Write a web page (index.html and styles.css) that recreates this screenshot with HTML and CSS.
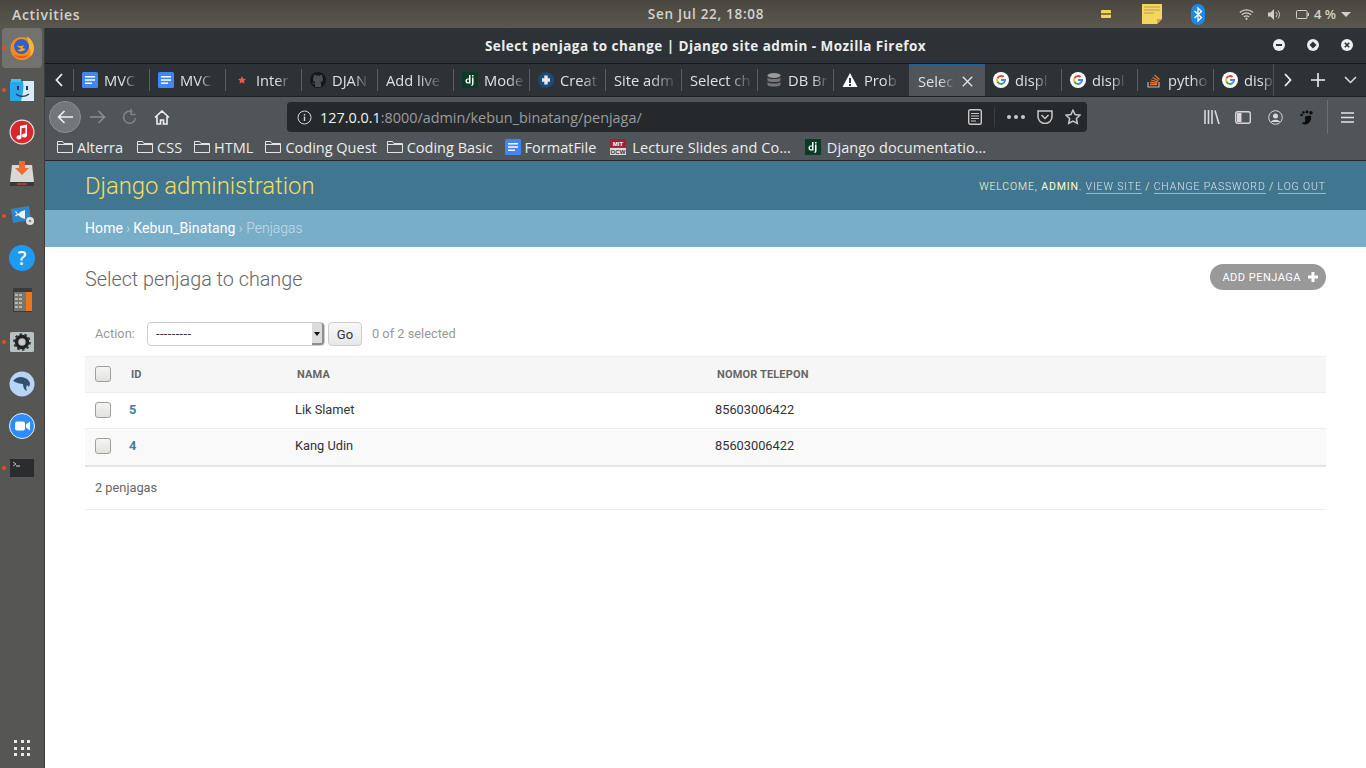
FILE: index.html
```html
<!DOCTYPE html>
<html lang="en">
<head>
    <meta charset="UTF-8">
    <title>Select penjaga to change | Django site admin</title>
    <link rel="stylesheet" href="styles.css">
</head>
<body>
    <svg class="sprites" width="0" height="0">
        <symbol id="i-doc" viewBox="0 0 16 16"><rect width="16" height="16" rx="1.5" fill="#4285f4"/><path d="M3 4h10v1.6H3zM3 7.2h10v1.6H3zM3 10.4h7V12H3z" fill="#fff"/></symbol>
        <symbol id="i-google" viewBox="0 0 16 16"><circle cx="8" cy="8" r="8" fill="#fff"/><path d="M8 3a5 5 0 0 1 3.3 1.2L10 5.6A3 3 0 0 0 5.2 7L3.6 5.7A5 5 0 0 1 8 3z" fill="#ea4335"/><path d="M3.6 5.7 5.2 7a3 3 0 0 0 0 2L3.6 10.3a5 5 0 0 1 0-4.6z" fill="#fbbc05"/><path d="M5.2 9A3 3 0 0 0 10 10.3l1.5 1.2A5 5 0 0 1 3.6 10.3z" fill="#34a853"/><path d="M13 7H8v2h2.8a2.5 2.5 0 0 1-.8 1.3l1.5 1.2A5 5 0 0 0 13 7z" fill="#4285f4"/></symbol>
        <symbol id="i-dj" viewBox="0 0 16 16"><rect width="16" height="16" fill="#0c3c26"/><path d="M7 3h1.500v8.500H5.800C4.200 11.500 3.500 10.600 3.500 9s.8-2.600 2.300-2.600H7zM7 7.600h-.9c-.7 0-1.100.5-1.100 1.400s.4 1.300 1.100 1.300H7zM10 3h1.500v1.400H10zM10 5.400h1.500v6.200c0 1.500-.6 2.200-2 2.400l-.3-1.100c.6-.2.800-.5.800-1.300z" fill="#fff"/></symbol>
        <symbol id="i-folder" viewBox="0 0 16 14"><path d="M.5 12.500v-11h5l1.500 2h8.500v9z" fill="none" stroke="#e4e4e2"/><path d="M.5 4.500h15" stroke="#e4e4e2"/></symbol>
    </svg>

    <div class="topbar">
        <span class="activities">Activities</span>
        <span class="clock">Sen Jul 22, 18:08</span>
        <div class="tray">
            <svg class="tray-note" width="10" height="8" viewBox="0 0 10 8"><rect width="10" height="8" rx="1" fill="#f3d65c"/><rect y="3" width="10" height="2" fill="#8a7a35"/></svg>
            <svg class="tray-sticky" width="20" height="20" viewBox="0 0 20 20"><path d="M0 0h20v15l-5 5H0z" fill="#f2d660"/><path d="M2 3h16M2 6h16M2 9h10" stroke="#b7a04a"/><path d="M15 20l5-5h-5z" fill="#c6a93f"/></svg>
            <svg class="tray-bt" width="14" height="21" viewBox="0 0 14 21"><rect width="14" height="21" rx="7" fill="#1e88e5"/><path d="M3.500 7l7 6.500-3.500 3.500V4l3.500 3.500-7 6.500" fill="none" stroke="#fff" stroke-width="1.300"/></svg>
            <svg class="tray-wifi" width="15" height="11" viewBox="0 0 15 11"><g fill="none" stroke="#cfcfcb" stroke-width="1.200"><path d="M.8 3.500a10 10 0 0 1 13.400 0"/><path d="M2.800 5.700a7 7 0 0 1 9.400 0"/><path d="M4.900 7.900a4 4 0 0 1 5.200 0"/></g><circle cx="7.500" cy="9.800" r="1.100" fill="#cfcfcb"/></svg>
            <svg class="tray-vol" width="13" height="11" viewBox="0 0 13 11"><path d="M0 3.500h2.500L6 0v11L2.500 7.500H0z" fill="#cfcfcb"/><path d="M8 3a3.500 3.500 0 0 1 0 5M10 1.500a6 6 0 0 1 0 8" fill="none" stroke="#cfcfcb"/></svg>
            <svg class="tray-batt" width="13" height="9" viewBox="0 0 13 9"><rect x=".5" y=".5" width="10.500" height="8" rx="1" fill="none" stroke="#cfcfcb"/><rect x="11.500" y="3" width="1.500" height="3" fill="#cfcfcb"/></svg>
            <span class="tray-pct">4 %</span>
            <span class="tray-caret"></span>
        </div>
    </div>

    <div class="desktop">
        <aside class="dock">
            <div class="dock-item is-active"><i class="run-dot"></i>
                <svg width="24" height="24" viewBox="0 0 24 24"><circle cx="12" cy="12.500" r="11.500" fill="#f68a1f"/><path d="M17 0c4 3 7 7 7 12a12 12 0 0 1-4 9c1.500-4 .5-8-2-11 .5-4-.5-7-1-10z" fill="#fcb336"/><circle cx="11.500" cy="10.500" r="7.500" fill="#2f62c8"/><path d="M7 9.500c2 1 5 .5 7-.5l-1.500 3 3 1c-2 3-6 3-8.500 1 2 0 3.500-.5 4-2-2 0-3.500-1-4-2.500z" fill="#f9a12c"/><path d="M4 19c4 4 11 4 15 0-4 1.500-9 1.500-15 0z" fill="#e8551f"/></svg>
            </div>
            <div class="dock-item"><i class="run-dot"></i>
                <svg width="24" height="22" viewBox="0 0 24 22"><rect y="2" width="24" height="20" rx="1" fill="#2aa7e8"/><path d="M13 2h11v20H11c2-6 3-13 2-20z" fill="#d7ecf8"/><path d="M1 0h10v3H1z" fill="#41c1f0"/><path d="M6 15c4 3 9 3 13 0" fill="none" stroke="#173b66" stroke-width="1.300"/><rect x="7" y="7" width="2" height="4" fill="#173b66"/><rect x="16" y="7" width="2" height="4" fill="#173b66"/></svg>
            </div>
            <div class="dock-item">
                <svg width="26" height="26" viewBox="0 0 26 26"><circle cx="13" cy="13" r="12.500" fill="#e8e8e8"/><circle cx="13" cy="13" r="11.300" fill="#d6282e"/><path d="M11 7l7-1.500v11a2.500 2 0 1 1-1.600-1.900V8.500l-3.900.8v9.200a2.500 2 0 1 1-1.500-1.900z" fill="#fff"/></svg>
            </div>
            <div class="dock-item">
                <svg width="24" height="26" viewBox="0 0 24 26"><path d="M2 4h20l2 17v4H0v-4z" fill="#d8d8d6"/><rect y="21" width="24" height="4" fill="#3a3a3a"/><rect x="7" y="22.500" width="10" height="1" fill="#e2562a"/><path d="M9 0h6v7h4l-7 7-7-7h4z" fill="#ef6a34"/></svg>
            </div>
            <div class="dock-item"><i class="run-dot"></i>
                <svg width="24" height="20" viewBox="0 0 24 20"><path d="M1 3l18-3 2 14-18 3z" fill="#2f86c9"/><path d="M8 8l3-2.500 4-1.500v9l-4-1.500-3-2.500-2 1.500-1-.8 2-2-2-2 1-.8z" fill="#e9f4fb"/><circle cx="20" cy="15" r="4" fill="#e2e2e2"/><circle cx="20" cy="15" r="1.300" fill="#8a8a8a"/></svg>
            </div>
            <div class="dock-item">
                <svg width="26" height="26" viewBox="0 0 26 26"><circle cx="13" cy="13" r="13" fill="#1e9bf0"/><text class="help-mark" x="13" y="19.500" text-anchor="middle">?</text></svg>
            </div>
            <div class="dock-item">
                <svg width="19" height="24" viewBox="0 0 19 24"><rect width="19" height="24" rx="1" fill="#3a3a3a"/><rect x="1" y="4" width="12" height="19" fill="#77776f"/><rect x="13" y="4" width="6" height="19" fill="#e8771f"/><g fill="#b5b5ad"><rect x="2" y="6" width="3" height="2"/><rect x="6" y="6" width="3" height="2"/><rect x="2" y="10" width="3" height="2"/><rect x="6" y="10" width="3" height="2"/><rect x="2" y="14" width="3" height="2"/><rect x="6" y="14" width="3" height="2"/><rect x="2" y="18" width="3" height="2"/><rect x="6" y="18" width="3" height="2"/></g></svg>
            </div>
            <div class="dock-item"><i class="run-dot"></i>
                <svg width="24" height="20" viewBox="0 0 24 20"><rect width="24" height="20" rx="1.500" fill="#b7c1c1"/><circle cx="12" cy="10" r="5.500" fill="none" stroke="#222" stroke-width="3.500"/><circle cx="12" cy="10" r="8" fill="none" stroke="#222" stroke-width="1.500" stroke-dasharray="2.500 2.500"/><circle cx="12" cy="10" r="2.500" fill="#ccc"/></svg>
            </div>
            <div class="dock-item">
                <svg width="26" height="26" viewBox="0 0 26 26"><circle cx="13" cy="13" r="12.500" fill="#b9d4f6"/><path d="M4 10c3-4 8-5 12-3 3 1 5 4 5 6l-1 3-2-2c-1 2-1 4 0 6-3-1-4-4-4-7-3 0-6-1-10-3z" fill="#33506e"/></svg>
            </div>
            <div class="dock-item">
                <svg width="26" height="26" viewBox="0 0 26 26"><circle cx="13" cy="13" r="12.500" fill="#2d8cff" stroke="#e8eef8"/><rect x="6" y="8.500" width="10" height="9" rx="2" fill="#fff"/><path d="M17 11.500l4-3v9l-4-3z" fill="#fff"/></svg>
            </div>
            <div class="dock-item"><i class="run-dot"></i>
                <svg width="24" height="18" viewBox="0 0 24 18"><rect width="24" height="18" fill="#2b2c2e"/><path d="M3 3l3 2-3 2" fill="none" stroke="#ddd" stroke-width=".8"/><path d="M6 7h4" stroke="#ddd"/></svg>
            </div>
            <div class="dock-grid">
                <i></i><i></i><i></i><i></i><i></i><i></i><i></i><i></i><i></i>
            </div>
        </aside>

        <div class="window">
            <div class="titlebar">
                <span class="title-text">Select penjaga to change | Django site admin - Mozilla Firefox</span>
                <div class="win-btns">
                    <svg width="12" height="12" viewBox="0 0 12 12"><circle cx="6" cy="6" r="6" fill="#eee"/><rect x="3" y="5" width="6" height="2" fill="#2d3236"/></svg>
                    <svg width="12" height="12" viewBox="0 0 12 12"><circle cx="6" cy="6" r="6" fill="#eee"/><path d="M6 2.500L9.500 6 6 9.500 2.500 6z" fill="#2d3236"/></svg>
                    <svg width="12" height="12" viewBox="0 0 12 12"><circle cx="6" cy="6" r="6" fill="#eee"/><path d="M3.800 3.800l4.400 4.400M8.200 3.800L3.800 8.200" stroke="#2d3236" stroke-width="1.600"/></svg>
                </div>
            </div>

            <div class="tabbar">
                <button class="tab-arrow"><svg width="8" height="14" viewBox="0 0 8 14"><path d="M7 1L1.500 7 7 13" fill="none" stroke="#eee" stroke-width="1.800"/></svg></button>
                <div class="tabs">
                    <div class="tab"><svg class="fav" width="16" height="16"><use href="#i-doc"/></svg><span class="tab-label">MVC</span></div>
                    <div class="tab"><svg class="fav" width="16" height="16"><use href="#i-doc"/></svg><span class="tab-label">MVC</span></div>
                    <div class="tab"><svg class="fav" width="16" height="16" viewBox="0 0 16 16"><path d="M8 4l1.200 2.700 2.800.3-2.100 1.900.6 2.900L8 10.300l-2.500 1.500.6-2.900L4 7l2.800-.3z" fill="#ee5a3a"/></svg><span class="tab-label">Inter</span></div>
                    <div class="tab"><svg class="fav" width="16" height="16" viewBox="0 0 16 16"><circle cx="8" cy="8" r="8" fill="#15171a"/><path d="M5 15v-3c-2 .4-2.600-.8-3-1.600 1 .2 1.500 1 2.900 1 .1-.6.300-1 .6-1.300C3.500 9.800 3 8.500 3 7c0-1 .3-1.700.8-2.300-.1-.6-.1-1.300.2-1.900 1 0 1.700.5 2.200.9a7 7 0 0 1 3.600 0c.5-.4 1.200-.9 2.200-.9.300.6.300 1.300.2 1.900.5.600.8 1.300.8 2.300 0 1.500-.5 2.800-2.500 3.100.4.400.5.900.5 1.500V15z" fill="#4a4f54"/></svg><span class="tab-label">DJAN</span></div>
                    <div class="tab"><span class="tab-label">Add live</span></div>
                    <div class="tab"><svg class="fav" width="16" height="16"><use href="#i-dj"/></svg><span class="tab-label">Mode</span></div>
                    <div class="tab"><svg class="fav" width="16" height="16" viewBox="0 0 16 16"><circle cx="8" cy="8" r="8" fill="#1c4a7a"/><path d="M4 8h8M8 3.500v9" stroke="#e8e8e8" stroke-width="3.500"/></svg><span class="tab-label">Creat</span></div>
                    <div class="tab"><span class="tab-label">Site adm</span></div>
                    <div class="tab"><span class="tab-label">Select ch</span></div>
                    <div class="tab"><svg class="fav" width="16" height="16" viewBox="0 0 16 16"><ellipse cx="8" cy="3.500" rx="6.500" ry="2.500" fill="#9a9a98"/><path d="M1.500 5.500c1 2 12 2 13 0v3c-1 2-12 2-13 0zM1.500 10c1 2 12 2 13 0v3c-1 2-12 2-13 0z" fill="#77777a"/></svg><span class="tab-label">DB Br</span></div>
                    <div class="tab"><svg class="fav" width="16" height="16" viewBox="0 0 16 16"><path d="M8 1l7.500 14H.5z" fill="#fff"/><rect x="7" y="6" width="2" height="5" fill="#33383c"/><rect x="7" y="12" width="2" height="2" fill="#33383c"/></svg><span class="tab-label">Prob</span></div>
                    <div class="tab is-active"><span class="tab-label">Selec</span><svg class="tab-close" width="11" height="11" viewBox="0 0 11 11"><path d="M.8.8l9.400 9.400M10.200.8L.8 10.200" stroke="#e6e6e6" stroke-width="1.300"/></svg></div>
                    <div class="tab"><svg class="fav" width="16" height="16"><use href="#i-google"/></svg><span class="tab-label">displ</span></div>
                    <div class="tab"><svg class="fav" width="16" height="16"><use href="#i-google"/></svg><span class="tab-label">displ</span></div>
                    <div class="tab"><svg class="fav" width="16" height="16" viewBox="0 0 16 16"><path d="M2 10v5h11v-5" fill="none" stroke="#b8b8b4" stroke-width="1.200"/><path d="M4 12.500h7M4.300 10.300l7 .8M5 8l6.800 2M6.500 5.500l6 3.200M8.500 3l5 4.500" stroke="#e8762c" stroke-width="1.300"/></svg><span class="tab-label">pytho</span></div>
                    <div class="tab"><svg class="fav" width="16" height="16"><use href="#i-google"/></svg><span class="tab-label">disp</span></div>
                </div>
                <button class="tab-arrow tab-next"><svg width="8" height="14" viewBox="0 0 8 14"><path d="M1 1l5.500 6L1 13" fill="none" stroke="#eee" stroke-width="1.800"/></svg></button>
                <button class="tab-arrow tab-new"><svg width="14" height="14" viewBox="0 0 14 14"><path d="M7 0v14M0 7h14" stroke="#eee" stroke-width="1.600"/></svg></button>
                <button class="tab-arrow tab-list"><svg width="13" height="8" viewBox="0 0 13 8"><path d="M1 1l5.500 5.500L12 1" fill="none" stroke="#ddd" stroke-width="1.500"/></svg></button>
            </div>

            <div class="navbar">
                <div class="back-btn"><svg width="16" height="14" viewBox="0 0 16 14"><path d="M16 7H2M7.500 1L1.500 7l6 6" fill="none" stroke="#f0f0f0" stroke-width="1.600"/></svg></div>
                <svg class="nav-ico" width="16" height="14" viewBox="0 0 16 14"><path d="M0 7h14M8.500 1l6 6-6 6" fill="none" stroke="#8b8f91" stroke-width="1.600"/></svg>
                <svg class="nav-ico" width="15" height="16" viewBox="0 0 15 16"><path d="M13.500 9a6 6 0 1 1-3-6" fill="none" stroke="#808486" stroke-width="1.500"/><path d="M9 0v5.500h4.500" fill="none" stroke="#808486" stroke-width="1.500"/></svg>
                <svg class="nav-ico nav-home" width="16" height="15" viewBox="0 0 16 15"><path d="M1 7.500L8 1l7 6.500M3 6.500V14h3.500V10h3v4H13V6.500" fill="none" stroke="#f0f0f0" stroke-width="1.600"/></svg>
                <div class="urlbar">
                    <svg class="url-info" width="15" height="15" viewBox="0 0 15 15"><circle cx="7.500" cy="7.500" r="6.500" fill="none" stroke="#d5d5d5"/><rect x="6.800" y="6.500" width="1.400" height="4.500" fill="#d5d5d5"/><rect x="6.800" y="4" width="1.400" height="1.500" fill="#d5d5d5"/></svg>
                    <span class="url-text"><b>127.0.0.1</b>:8000/admin/kebun_binatang/penjaga/</span>
                    <svg class="url-reader" width="14" height="16" viewBox="0 0 14 16"><rect x=".7" y=".7" width="12.600" height="14.600" rx="1.500" fill="none" stroke="#c9c9c9" stroke-width="1.400"/><path d="M3 4.500h8M3 7h8M3 9.500h8M3 12h5" stroke="#c9c9c9"/></svg>
                    <i class="url-sep"></i>
                    <span class="url-more"><i></i><i></i><i></i></span>
                    <svg class="url-pocket" width="16" height="14" viewBox="0 0 16 14"><path d="M1 1h14v5.500a7 7 0 0 1-14 0z" fill="none" stroke="#c9c9c9" stroke-width="1.500"/><path d="M4.500 5L8 8.500 11.500 5" fill="none" stroke="#c9c9c9" stroke-width="1.500"/></svg>
                    <svg class="url-star" width="16" height="16" viewBox="0 0 16 16"><path d="M8 1.200l2.100 4.400 4.900.6-3.600 3.300.9 4.800L8 12l-4.300 2.300.9-4.800L1 6.200l4.900-.6z" fill="none" stroke="#c9c9c9" stroke-width="1.500"/></svg>
                </div>
                <div class="nav-right">
                    <svg class="nav-lib" width="16" height="14" viewBox="0 0 16 14"><path d="M1 0v14M4.500 0v14M8 0v14M11 .5l4 13.500" stroke="#d8d8d8" stroke-width="1.600" fill="none"/></svg>
                    <svg width="16" height="13" viewBox="0 0 16 13"><rect x=".7" y=".7" width="14.600" height="11.600" rx="2" fill="none" stroke="#d8d8d8" stroke-width="1.400"/><rect x="2" y="2" width="4.500" height="9" fill="#d8d8d8"/></svg>
                    <svg width="15" height="15" viewBox="0 0 15 15"><circle cx="7.500" cy="7.500" r="6.800" fill="none" stroke="#d8d8d8"/><circle cx="7.500" cy="6" r="2.500" fill="#d8d8d8"/><path d="M3 12c1-3 8-3 9 0z" fill="#d8d8d8"/></svg>
                    <svg width="13" height="15" viewBox="0 0 13 15"><path d="M11 6c1 4-2 8.500-6 8.500-2 0-3-1-3-2 3 .5 4-1.500 3-3.500S6 5 11 6z" fill="#0d0d0d"/><circle cx="1.500" cy="5" r="1.300" fill="#0d0d0d"/><circle cx="3.500" cy="2.500" r="1.300" fill="#0d0d0d"/><circle cx="7" cy="1.800" r="1.500" fill="#0d0d0d"/><circle cx="11" cy="2.800" r="1.700" fill="#0d0d0d"/></svg>
                    <i class="nav-sep"></i>
                    <svg width="13" height="11" viewBox="0 0 13 11"><path d="M0 1h13M0 5.500h13M0 10h13" stroke="#e4e4e4" stroke-width="1.600"/></svg>
                </div>
            </div>

            <div class="bookmarks">
                <span class="bm bm-alterra"><svg width="16" height="14"><use href="#i-folder"/></svg>Alterra</span>
                <span class="bm"><svg width="16" height="14"><use href="#i-folder"/></svg>CSS</span>
                <span class="bm"><svg width="16" height="14"><use href="#i-folder"/></svg>HTML</span>
                <span class="bm bm-quest"><svg width="16" height="14"><use href="#i-folder"/></svg>Coding Quest</span>
                <span class="bm"><svg width="16" height="14"><use href="#i-folder"/></svg>Coding Basic</span>
                <span class="bm"><svg width="16" height="16"><use href="#i-doc"/></svg>FormatFile</span>
                <span class="bm bm-wide"><svg width="16" height="16" viewBox="0 0 16 16"><rect width="16" height="8" fill="#a31f34"/><rect y="9" width="16" height="7" fill="#d9d9d9"/><text class="mit-mark" x="8" y="7">MIT</text><text class="ocw-mark" x="8" y="15">OCW</text></svg>Lecture Slides and Co…</span>
                <span class="bm bm-wide"><svg width="16" height="16"><use href="#i-dj"/></svg>Django documentatio…</span>
            </div>

            <div class="page">
                <header class="site-header">
                    <h1 class="branding">Django administration</h1>
                    <div class="user-tools">
                        Welcome, <strong>admin</strong>. <a href="#">View site</a> / <a href="#">Change password</a> / <a href="#">Log out</a>
                    </div>
                </header>
                <div class="breadcrumbs"><a href="#">Home</a> › <a href="#">Kebun_Binatang</a> › Penjagas</div>

                <main class="content">
                    <div class="content-head">
                        <h2>Select penjaga to change</h2>
                        <a class="addlink" href="#">Add penjaga <svg width="10" height="10" viewBox="0 0 10 10"><path d="M5 0v10M0 5h10" stroke="#fff" stroke-width="3"/></svg></a>
                    </div>

                    <div class="actions">
                        <label>Action:</label>
                        <div class="fake-select"><span class="fake-value">---------</span><span class="fake-arrow"></span></div>
                        <button class="go-btn">Go</button>
                        <span class="counter">0 of 2 selected</span>
                    </div>

                    <table class="result-list">
                        <colgroup><col class="col-check"><col class="col-id"><col class="col-nama"><col></colgroup>
                        <thead>
                            <tr><th><input type="checkbox"></th><th>ID</th><th>Nama</th><th>Nomor Telepon</th></tr>
                        </thead>
                        <tbody>
                            <tr><td><input type="checkbox"></td><td><a href="#">5</a></td><td>Lik Slamet</td><td>85603006422</td></tr>
                            <tr class="alt"><td><input type="checkbox"></td><td><a href="#">4</a></td><td>Kang Udin</td><td>85603006422</td></tr>
                        </tbody>
                    </table>
                    <p class="paginator">2 penjagas</p>
                </main>
            </div>
        </div>
    </div>
</body>
</html>
```

FILE: styles.css
```css
* {
    box-sizing: border-box;
}
html, body {
    height: 100%;
}
body {
    display: flex;
    flex-direction: column;
    margin: 0;
    overflow: hidden;
    font-family: "Open Sans", "Noto Sans", sans-serif;
    background-color: #fff;
}
.sprites {
    display: block;
    height: 0;
}
svg {
    flex-shrink: 0;
}

/* top bar */
.topbar {
    display: grid;
    grid-template-columns: 1fr auto 1fr;
    align-items: center;
    height: 28px;
    padding: 0 0 0 12px;
    font-size: 13.5px;
    font-weight: 600;
    color: #d3d2cd;
    background: linear-gradient(#4a4740, #5a574f);
}
.activities {
    font-size: 14px;
    letter-spacing: 0.7px;
}
.clock {
    margin-left: 34px;
    letter-spacing: 0.7px;
}
.tray {
    display: flex;
    align-items: center;
    justify-content: flex-end;
    padding-right: 15px;
}
.tray-note {
    margin-right: 31px;
}
.tray-sticky {
    margin-right: 29px;
}
.tray-bt {
    margin-right: 34px;
}
.tray-wifi {
    margin-right: 14px;
}
.tray-vol {
    margin-right: 15px;
}
.tray-batt {
    margin-right: 5px;
}
.tray-pct {
    font-size: 13px;
}
.tray-caret {
    width: 0;
    height: 0;
    margin-left: 5px;
    border-left: 5px solid transparent;
    border-right: 5px solid transparent;
    border-top: 5px solid #cfcfcb;
}

.desktop {
    flex: 1;
    display: flex;
    min-height: 0;
}

/* dock */
.dock {
    display: flex;
    flex-direction: column;
    width: 45px;
    flex-shrink: 0;
    background: #565754;
    border-right: 1px solid #3b3c3a;
}
.dock-item {
    position: relative;
    display: flex;
    align-items: center;
    justify-content: center;
    width: 44px;
    height: 42px;
}
.dock-item.is-active {
    background-color: #72736f;
    border-radius: 4px;
    width: 40px;
    height: 40px;
    margin: 0 2px 1px;
}
.run-dot {
    position: absolute;
    left: 2px;
    top: 19px;
    width: 4px;
    height: 4px;
    border-radius: 50%;
    background-color: #e4501e;
}
.is-active .run-dot {
    left: 0;
    top: 18px;
}
.dock-grid {
    display: grid;
    grid-template-columns: repeat(3, 3px);
    gap: 3.5px;
    margin: auto 0 12px 14px;
}
.dock-grid i {
    width: 3px;
    height: 3px;
    background-color: #e8e8e8;
}
.help-mark {
    font-family: "Open Sans", sans-serif;
    font-size: 19px;
    font-weight: 600;
    fill: #fff;
}

/* firefox window */
.window {
    flex: 1;
    display: flex;
    flex-direction: column;
    min-width: 0;
}
.titlebar {
    position: relative;
    display: flex;
    align-items: center;
    justify-content: center;
    flex-shrink: 0;
    height: 36px;
    background-color: #2d3236;
    border-bottom: 1px solid #15171a;
    font-size: 13.5px;
    font-weight: 700;
    letter-spacing: 0.45px;
    color: #eceded;
}
.win-btns {
    position: absolute;
    right: 13px;
    top: 11px;
    display: flex;
    gap: 22px;
}
.tabbar {
    display: flex;
    align-items: stretch;
    flex-shrink: 0;
    height: 33px;
    background-color: #2d3236;
    border-bottom: 1px solid #1e2225;
}
.tab-arrow {
    display: flex;
    align-items: center;
    justify-content: center;
    width: 28px;
    flex-shrink: 0;
    padding: 0;
    border: 0;
    background: none;
}
.tabs {
    display: flex;
    width: 1201px;
    overflow: hidden;
    border-right: 1px solid #4a4f53;
}
.tab {
    display: flex;
    align-items: center;
    gap: 6px;
    width: 76px;
    flex-shrink: 0;
    padding-left: 8px;
    border-left: 1px solid #585d61;
    margin: 5px 0;
    font-size: 14.7px;
    color: #dfe0e0;
    overflow: hidden;
}
.tab.is-active {
    justify-content: space-between;
    margin: 0;
    padding: 0 12px 0 9px;
    border-top: 2px solid #1e5f9e;
    border-left: 0;
    background-color: #50555a;
}
.tab.is-active + .tab {
    border-left: 0;
}
.tab-label {
    white-space: nowrap;
    -webkit-mask-image: linear-gradient(to right, #000 62%, rgba(0, 0, 0, 0.15) 100%);
    mask-image: linear-gradient(to right, #000 62%, rgba(0, 0, 0, 0.15) 100%);
}
.tab-next {
    width: 27px;
}
.tab-new {
    width: 33px;
}
.tab-list {
    width: 32px;
}
.navbar {
    display: flex;
    align-items: center;
    flex-shrink: 0;
    height: 38px;
    padding: 2px 12px 0 4px;
    background-color: #50555a;
}
.back-btn {
    display: flex;
    align-items: center;
    justify-content: center;
    width: 32px;
    height: 32px;
    border-radius: 50%;
    background-color: #73777a;
    border: 1px solid #8c9092;
    margin-right: 9px;
}
.nav-ico {
    margin-right: 16px;
}
.nav-home {
    margin: 0 117px 0 1px;
}
.urlbar {
    display: flex;
    align-items: center;
    width: 800px;
    height: 30px;
    padding: 0 6px 0 10px;
    border-radius: 4px;
    background-color: #26292c;
    font-size: 14.4px;
    color: #999c9e;
}
.url-info {
    margin-right: 8px;
}
.url-text {
    flex: 1;
    white-space: nowrap;
}
.url-text b {
    font-weight: 400;
    color: #f2f2f2;
}
.url-reader {
    margin-right: 12px;
}
.url-sep {
    width: 1px;
    height: 20px;
    margin-right: 12px;
    background-color: #3a3e41;
}
.url-more {
    display: flex;
    gap: 3px;
    margin-right: 12px;
}
.url-more i {
    width: 4px;
    height: 4px;
    border-radius: 50%;
    background-color: #c9c9c9;
}
.url-pocket {
    margin-right: 12px;
}
.nav-right {
    display: flex;
    align-items: center;
    gap: 17px;
    margin-left: auto;
}
.nav-lib {
    margin-right: -2px;
}
.nav-sep {
    width: 1px;
    height: 34px;
    margin: 0 -4px 0 -3px;
    background-color: #6c7073;
}
.bookmarks {
    display: flex;
    align-items: center;
    gap: 12px;
    flex-shrink: 0;
    height: 26px;
    padding: 0 0 1px 12px;
    background-color: #50555a;
    border-bottom: 1px solid #26292c;
    font-size: 14.5px;
    color: #ecedec;
    white-space: nowrap;
}
.bm {
    display: flex;
    align-items: center;
    gap: 4px;
}
.bm-alterra {
    margin-right: 2px;
}
.bm-quest {
    margin-right: -2px;
}
.bm-wide {
    gap: 6px;
    margin-left: 2px;
    letter-spacing: 0.1px;
}
.mit-mark, .ocw-mark {
    font-family: "Liberation Sans", sans-serif;
    font-size: 6px;
    font-weight: 700;
    text-anchor: middle;
}
.mit-mark {
    fill: #fff;
}
.ocw-mark {
    fill: #333;
}

/* django admin page */
.page {
    flex: 1;
    min-height: 0;
    font-family: Roboto, sans-serif;
    font-size: 12.8px;
    color: #333;
    background-color: #fff;
}
.site-header {
    display: flex;
    align-items: center;
    justify-content: space-between;
    height: 49px;
    padding: 0 40px;
    background-color: #417690;
    color: #ffc;
}
.branding {
    margin: 0;
    font-size: 23.8px;
    font-weight: 300;
    color: #f5dd5d;
}
.user-tools {
    padding-top: 1px;
    font-size: 10.5px;
    font-weight: 300;
    letter-spacing: 0.87px;
    text-transform: uppercase;
}
.user-tools strong {
    font-weight: 400;
}
.user-tools a {
    color: #fff;
    opacity: 0.8;
    text-decoration: none;
    border-bottom: 1px solid rgba(255, 255, 255, 0.6);
}
.breadcrumbs {
    display: flex;
    align-items: center;
    gap: 3px;
    height: 37px;
    padding: 0 40px 1px;
    background-color: #79aec8;
    font-size: 14px;
    font-weight: 300;
    color: #c4dce8;
}
.breadcrumbs a {
    font-weight: 400;
    letter-spacing: 0.1px;
    color: #fff;
    text-decoration: none;
}
.content {
    padding: 17px 40px 0;
}
.content-head {
    display: flex;
    align-items: center;
    justify-content: space-between;
    height: 30px;
}
.content-head h2 {
    margin: 0;
    font-size: 19.8px;
    font-weight: 300;
    color: #666;
}
.addlink {
    align-self: flex-start;
    display: flex;
    align-items: center;
    gap: 7px;
    height: 26px;
    padding: 0 8px 0 12px;
    border-radius: 15px;
    background-color: #999;
    font-size: 11px;
    letter-spacing: 0.5px;
    color: #fff;
    text-decoration: none;
    text-transform: uppercase;
}
.actions {
    display: flex;
    align-items: center;
    height: 24px;
    margin-top: 28px;
    padding-left: 10px;
    color: #999;
}
.actions label, .counter {
    padding-bottom: 2px;
}
.actions label {
    width: 52px;
}
.fake-select {
    display: flex;
    justify-content: space-between;
    width: 178px;
    height: 24px;
    border: 1px solid #ccc;
    border-radius: 4px;
    background-color: #fff;
    color: #333;
}
.fake-value {
    padding: 3px 8px;
    line-height: 16px;
    letter-spacing: 0.4px;
}
.fake-arrow {
    position: relative;
    width: 12px;
    border-right: 2px solid #8f8f8c;
    border-bottom: 2px solid #8f8f8c;
    background-color: #dcdcda;
    border-radius: 0 3px 3px 0;
}
.fake-arrow::after {
    content: "";
    position: absolute;
    left: 2px;
    top: 9px;
    border-left: 3px solid transparent;
    border-right: 3px solid transparent;
    border-top: 4px solid #111;
}
.go-btn {
    width: 34px;
    height: 24px;
    margin: 0 10px 0 3px;
    padding: 0;
    border: 1px solid #ccc;
    border-radius: 4px;
    background: linear-gradient(#f8f8f8, #e8e8e8);
    font-family: Roboto, sans-serif;
    font-size: 13px;
    color: #333;
}
.result-list {
    width: 100%;
    margin-top: 10px;
    table-layout: fixed;
    border-collapse: collapse;
    border-top: 1px solid #eee;
    border-bottom: 2px solid #e4e4e4;
}
.col-check {
    width: 34px;
}
.col-id {
    width: 166px;
}
.col-nama {
    width: 420px;
}
.result-list th {
    height: 36px;
    padding: 0 10px 0 12px;
    background-color: #f6f6f6;
    border-bottom: 1px solid #eee;
    font-size: 11px;
    font-weight: 700;
    letter-spacing: 0.15px;
    color: #666;
    text-align: left;
    text-transform: uppercase;
}
.result-list td {
    height: 36px;
    padding: 0 10px 2px;
    border-bottom: 1px solid #eee;
    color: #333;
}
.result-list tr.alt td {
    background-color: #f9f9f9;
    border-bottom: 0;
    height: 37px;
}
.result-list td a {
    font-weight: 700;
    color: #447e9b;
    text-decoration: none;
}
.result-list th:first-child, .result-list td:first-child {
    padding-left: 10px;
    padding-right: 0;
    padding-bottom: 2px;
}
.result-list input {
    display: block;
    -webkit-appearance: none;
    appearance: none;
    width: 16px;
    height: 16px;
    margin: 0;
    border: 1px solid #a09f9a;
    border-radius: 3px;
    background: linear-gradient(#f4f4f3, #e2e2df);
}
.paginator {
    display: flex;
    align-items: center;
    height: 43px;
    margin: 0;
    padding-left: 10px;
    border-bottom: 1px solid #eee;
    color: #666;
}
```
